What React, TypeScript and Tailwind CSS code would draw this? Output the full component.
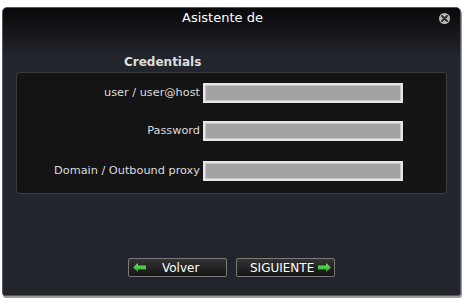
import React from "react";

const font = { fontFamily: '"DejaVu Sans", "Liberation Sans", sans-serif' };

const Arrow: React.FC<{ dir: "left" | "right" }> = ({ dir }) => (
  <svg width="13" height="9" viewBox="0 0 13 9" className={dir === "left" ? "" : "-scale-x-100"}>
    <defs>
      <linearGradient id={`g-${dir}`} x1="0" y1="0" x2="0" y2="1">
        <stop offset="0" stopColor="#7de86a" />
        <stop offset="1" stopColor="#22a02a" />
      </linearGradient>
    </defs>
    <polygon points="0,4.5 5,0 5,2.5 13,2.5 13,6.5 5,6.5 5,9" fill={`url(#g-${dir})`} />
  </svg>
);

const fields = [
  { label: "user / user@host", mt: "mt-0" },
  { label: "Password", mt: "mt-[18px]" },
  { label: "Domain / Outbound proxy", mt: "mt-[20px]" },
];

export default function App() {
  return (
    <div className="w-[464px] h-[305px] bg-white pt-[7px] pl-[2px]" style={font}>
      <div className="w-[459px] h-[289px] rounded-t-[5px] rounded-b-[3px] border border-[#55585e] bg-[#23252d] shadow-[1px_2px_0_#9a9a9a] flex flex-col overflow-hidden">
        <div className="h-[48px] bg-linear-to-b from-[#09090a] to-[#23252d] relative">
          <div className="h-[20px] flex items-center justify-center text-[13px] text-white pr-[18px]">Asistente de</div>
          <div className="absolute right-[10px] top-[5px] w-[11px] h-[11px] rounded-full bg-[#b9b9b9] flex items-center justify-center">
            <svg width="7" height="7" viewBox="0 0 7 7">
              <path d="M1 1 L6 6 M6 1 L1 6" stroke="#2a2a2a" strokeWidth="1.8" strokeLinecap="round" />
            </svg>
          </div>
        </div>
        <div className="-mt-[2px] pl-[121px] text-[12px] font-bold text-[#dedede] leading-[16px]">Credentials</div>
        <div className="mt-[2px] mx-[13px] h-[122px] rounded-[4px] border border-[#3b3c40] bg-[#141414] pt-[10px]">
          {fields.map((f) => (
            <div key={f.label} className={`flex items-center ${f.mt}`}>
              <div className="w-[184px] text-right text-[11.3px] text-[#dcdcdc] pr-[1px]">{f.label}</div>
              <div className="ml-[2px] w-[200px] h-[20px] border-2 border-[#e6e6e6] bg-[#a3a3a3] shadow-[inset_0_0_0_1px_#c8c8c8]" />
            </div>
          ))}
        </div>
        <div className="flex-1" />
        <div className="flex justify-center gap-[9px] pb-[18px]">
          <button className="w-[99px] h-[19px] rounded-[2px] border border-[#7a7a7a] bg-linear-to-b from-[#333333] to-[#161616] flex items-center text-[12px] text-white pl-[4px]">
            <Arrow dir="left" />
            <span className="ml-[16px]">Volver</span>
          </button>
          <button className="w-[99px] h-[19px] rounded-[2px] border border-[#7a7a7a] bg-linear-to-b from-[#333333] to-[#161616] flex items-center text-[12px] text-white pl-[13px]">
            <span>SIGUIENTE</span>
            <span className="ml-[4px] flex"><Arrow dir="right" /></span>
          </button>
        </div>
      </div>
    </div>
  );
}
